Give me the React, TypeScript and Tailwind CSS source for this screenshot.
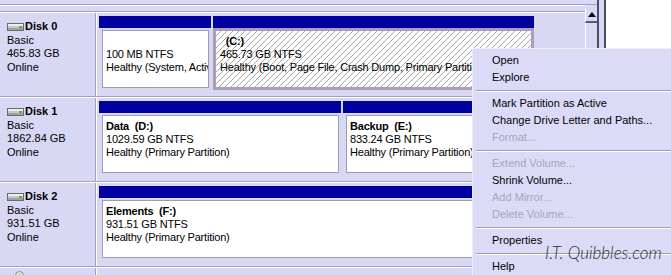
import React from 'react';

type Part = {
  width: number;
  label?: string;
  size: string;
  status: string;
  selected?: boolean;
};

type Disk = {
  name: string;
  kind: string;
  size: string;
  state: string;
  parts: Part[];
};

const disks: Disk[] = [
  {
    name: 'Disk 0',
    kind: 'Basic',
    size: '465.83 GB',
    state: 'Online',
    parts: [
      { width: 112, label: '', size: '100 MB NTFS', status: 'Healthy (System, Active, Primary Partition)' },
      { width: 321, label: '  (C:)', size: '465.73 GB NTFS', status: 'Healthy (Boot, Page File, Crash Dump, Primary Partition)', selected: true },
    ],
  },
  {
    name: 'Disk 1',
    kind: 'Basic',
    size: '1862.84 GB',
    state: 'Online',
    parts: [
      { width: 242, label: 'Data  (D:)', size: '1029.59 GB NTFS', status: 'Healthy (Primary Partition)' },
      { width: 191, label: 'Backup  (E:)', size: '833.24 GB NTFS', status: 'Healthy (Primary Partition)' },
    ],
  },
  {
    name: 'Disk 2',
    kind: 'Basic',
    size: '931.51 GB',
    state: 'Online',
    parts: [
      { width: 435, label: 'Elements  (F:)', size: '931.51 GB NTFS', status: 'Healthy (Primary Partition)' },
    ],
  },
];

type MenuEntry = { text: string; disabled?: boolean } | 'sep';

const menu: MenuEntry[] = [
  { text: 'Open' },
  { text: 'Explore' },
  'sep',
  { text: 'Mark Partition as Active' },
  { text: 'Change Drive Letter and Paths...' },
  { text: 'Format...', disabled: true },
  'sep',
  { text: 'Extend Volume...', disabled: true },
  { text: 'Shrink Volume...' },
  { text: 'Add Mirror...', disabled: true },
  { text: 'Delete Volume...', disabled: true },
  'sep',
  { text: 'Properties' },
  'sep',
  { text: 'Help' },
];

function DiskIcon() {
  return (
    <svg width="17" height="8" viewBox="0 0 17 8" className="shrink-0">
      <rect x="0.5" y="0.5" width="16" height="7" fill="#c8c8c8" stroke="#6a6a6a" />
      <rect x="1" y="1" width="15" height="2" fill="#eeeeee" />
      <rect x="1" y="5" width="15" height="2" fill="#a0a0a0" />
      <rect x="12" y="3" width="3" height="2" fill="#3cc03c" />
    </svg>
  );
}

function Partition({ part }: { part: Part }) {
  return (
    <div className="flex flex-col shrink-0" style={{ width: part.width }}>
      <div className="h-[12px] bg-[#0000a0]" />
      {part.selected ? (
        <div className="h-[62px] border-[3px] border-[#ad9db6] bg-white overflow-hidden">
          <div className="h-full px-[4px] pt-[4px] leading-[13px] tracking-[-0.2px] whitespace-nowrap overflow-hidden bg-[repeating-linear-gradient(135deg,#ffffff_0px,#ffffff_3.2px,#a9a9a9_3.2px,#a9a9a9_4.24px)]">
            <div className="font-bold whitespace-pre">{part.label}</div>
            <div>{part.size}</div>
            <div>{part.status}</div>
          </div>
        </div>
      ) : (
        <div className="mt-[2px] ml-[3px] mr-[2px] h-[58px] border border-[#9c9cb0] bg-white px-[3px] pt-[4px] leading-[13px] tracking-[-0.2px] whitespace-nowrap overflow-hidden">
          <div className="font-bold whitespace-pre h-[13px]">{part.label}</div>
          <div>{part.size}</div>
          <div>{part.status}</div>
        </div>
      )}
    </div>
  );
}

function DiskRow({ disk }: { disk: Disk }) {
  return (
    <div className="flex h-[85px] border-t border-[#a2a2c0]">
      <div className="flex w-full border-t border-white">
        <div className="w-[96px] shrink-0 border-r border-[#a2a2c0] pl-[7px] pt-[7px] leading-[13.5px]">
          <div className="flex items-center gap-[1px] font-bold">
            <DiskIcon />
            <span>{disk.name}</span>
          </div>
          <div>{disk.kind}</div>
          <div>{disk.size}</div>
          <div>{disk.state}</div>
        </div>
        <div className="w-[1px] bg-white shrink-0" />
        <div className="flex gap-[2px] pl-[2px] pt-[3px]">
          {disk.parts.map((p, i) => (
            <Partition key={i} part={p} />
          ))}
        </div>
      </div>
    </div>
  );
}

export default function App() {
  return (
    <div className="relative w-[671px] h-[275px] overflow-hidden bg-[#d8d8f5] text-[11px] text-black font-['Liberation_Sans',Arial,sans-serif]">
      <div className="flex h-full">
        {/* Graphical disk list */}
        <div className="w-[585px] shrink-0">
          <div className="h-[11px] pt-[4px]">
            <div className="border-t border-[#a2a2c0]" />
            <div className="border-t border-white" />
          </div>
          {disks.map((d) => (
            <DiskRow key={d.name} disk={d} />
          ))}
          <div className="flex h-[20px] border-t border-[#a2a2c0]">
            <div className="flex w-full border-t border-white">
              <div className="w-[96px] shrink-0 border-r border-[#a2a2c0] pl-[15px] pt-[3px]">
                <svg width="9" height="9" viewBox="0 0 9 9">
                  <circle cx="4.5" cy="4.5" r="4" fill="#e8e8e8" stroke="#8a8a8a" />
                  <circle cx="4.5" cy="4.5" r="1.2" fill="#6fa06f" />
                </svg>
              </div>
              <div className="w-[1px] bg-white" />
            </div>
          </div>
        </div>

        {/* Scroll bar */}
        <div className="w-[14px] shrink-0 flex flex-col border-r-2 border-[#4e4e60]">
          <div className="h-[5px] border-b border-[#a2a2c0]" />
          <div className="h-[3px]" />
          <div className="h-[15px] border-l border-white border-b-2 border-b-[#5a5a6a] flex items-center justify-center">
            <svg width="8" height="5" viewBox="0 0 8 5">
              <path d="M4 0 L8 5 L0 5 Z" fill="#000" />
            </svg>
          </div>
          <div className="flex-1 border-l border-white" />
        </div>

        <div className="w-[5px] shrink-0" />
        <div className="w-[2px] shrink-0 bg-[#4e4e60]" />
        <div className="flex-1 bg-white" />
      </div>

      {/* Context menu */}
      <div className="absolute left-[472px] top-[48px] w-[220px] h-[240px] bg-[#dbdbf8] border-l border-t border-[#ececff] pt-[3px]">
        {menu.map((m, i) =>
          m === 'sep' ? (
            <div key={i} className="h-[9px] pt-[4px] ml-[3px]">
              <div className="border-t border-[#9c9cb4]" />
              <div className="border-t border-white" />
            </div>
          ) : (
            <div
              key={i}
              className={`h-[17px] leading-[17px] pl-[19px] whitespace-nowrap ${m.disabled ? 'text-[#a6a6b8]' : 'text-black'}`}
            >
              {m.text}
            </div>
          )
        )}
      </div>

      {/* Watermark */}
      <div className="absolute left-[545px] top-[243px] text-[17px] leading-[20px] italic font-light text-[#2c2c2c] font-['Lato',sans-serif] whitespace-nowrap">
        I.T. Quibbles.com
      </div>
    </div>
  );
}
